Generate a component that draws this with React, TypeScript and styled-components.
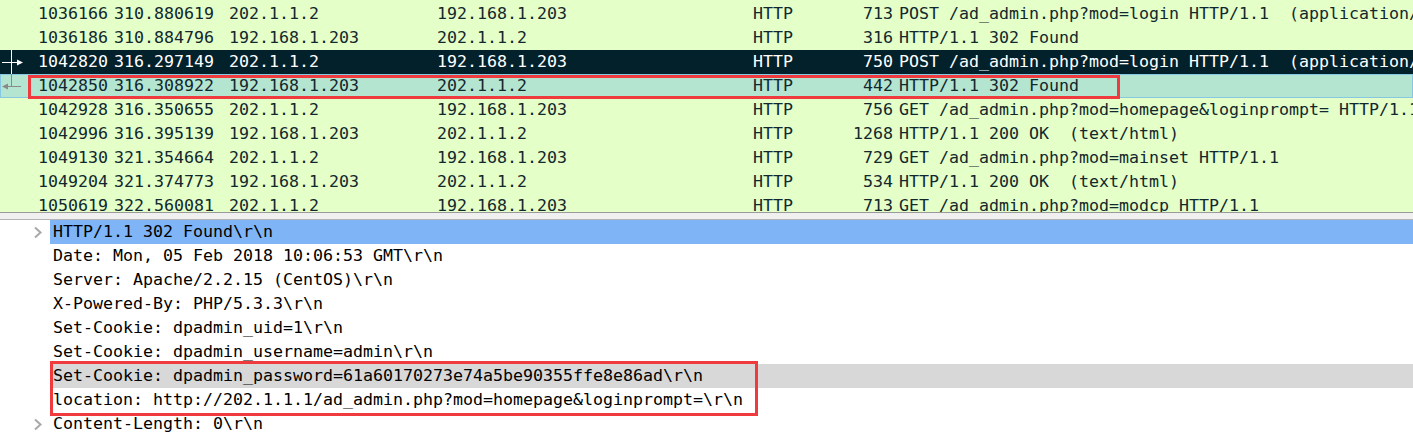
import React from "react";
import styled, { createGlobalStyle, css } from "styled-components";

const GlobalStyle = createGlobalStyle`
  html, body {
    margin: 0;
    padding: 0;
    background: #ffffff;
  }
  body {
    font-family: "DejaVu Sans Mono", "Liberation Mono", monospace;
    font-size: 16.61px;
  }
`;

type RowKind = "normal" | "selected" | "related";

interface Packet {
  no: string;
  time: string;
  src: string;
  dst: string;
  proto: string;
  len: string;
  info: string;
  kind: RowKind;
  marked?: boolean;
}

const packets: Packet[] = [
  { no: "1036166", time: "310.880619", src: "202.1.1.2", dst: "192.168.1.203", proto: "HTTP", len: "713", info: "POST /ad_admin.php?mod=login HTTP/1.1  (application/x-www-form-urlencoded)", kind: "normal" },
  { no: "1036186", time: "310.884796", src: "192.168.1.203", dst: "202.1.1.2", proto: "HTTP", len: "316", info: "HTTP/1.1 302 Found", kind: "normal" },
  { no: "1042820", time: "316.297149", src: "202.1.1.2", dst: "192.168.1.203", proto: "HTTP", len: "750", info: "POST /ad_admin.php?mod=login HTTP/1.1  (application/x-www-form-urlencoded)", kind: "selected" },
  { no: "1042850", time: "316.308922", src: "192.168.1.203", dst: "202.1.1.2", proto: "HTTP", len: "442", info: "HTTP/1.1 302 Found", kind: "related", marked: true },
  { no: "1042928", time: "316.350655", src: "202.1.1.2", dst: "192.168.1.203", proto: "HTTP", len: "756", info: "GET /ad_admin.php?mod=homepage&loginprompt= HTTP/1.1", kind: "normal" },
  { no: "1042996", time: "316.395139", src: "192.168.1.203", dst: "202.1.1.2", proto: "HTTP", len: "1268", info: "HTTP/1.1 200 OK  (text/html)", kind: "normal" },
  { no: "1049130", time: "321.354664", src: "202.1.1.2", dst: "192.168.1.203", proto: "HTTP", len: "729", info: "GET /ad_admin.php?mod=mainset HTTP/1.1", kind: "normal" },
  { no: "1049204", time: "321.374773", src: "192.168.1.203", dst: "202.1.1.2", proto: "HTTP", len: "534", info: "HTTP/1.1 200 OK  (text/html)", kind: "normal" },
  { no: "1050619", time: "322.560081", src: "202.1.1.2", dst: "192.168.1.203", proto: "HTTP", len: "713", info: "GET /ad_admin.php?mod=modcp HTTP/1.1", kind: "normal" },
];

const Page = styled.div`
  display: flex;
  flex-direction: column;
  width: 1413px;
  height: 436px;
  overflow: hidden;
  background: #ffffff;
`;

const PacketList = styled.div`
  height: 212px;
  padding-top: 2px;
  box-sizing: border-box;
  background: #e4ffc7;
  overflow: hidden;
  flex: none;
`;

const rowColors: Record<RowKind, ReturnType<typeof css>> = {
  normal: css`
    background: #e4ffc7;
    color: #12272e;
  `,
  selected: css`
    background: #03212b;
    color: #ffffff;
  `,
  related: css`
    background: #b4e5d1;
    color: #12272e;
    box-shadow: inset 0 0 0 1px #86c8e2;
  `,
};

const PacketRow = styled.div<{ $kind: RowKind }>`
  position: relative;
  display: grid;
  grid-template-columns: 28px 84px 115px 208px 316px 94px 52px 1fr;
  height: 24px;
  line-height: 24px;
  white-space: pre;
  ${(p) => rowColors[p.$kind]}
`;

const Cell = styled.div<{ $right?: boolean }>`
  overflow: hidden;
  padding: ${(p) => (p.$right ? "0 4px 0 0" : "0 0 0 2px")};
  text-align: ${(p) => (p.$right ? "right" : "left")};
`;

const Gutter = styled.div`
  position: relative;
  height: 24px;
  svg {
    display: block;
  }
`;

const RowMark = styled.div`
  position: absolute;
  left: 28px;
  top: 1px;
  width: 1092px;
  height: 24px;
  box-sizing: border-box;
  border: 3px solid #ef3b3d;
  z-index: 2;
  pointer-events: none;
`;

const Splitter = styled.div`
  flex: none;
  height: 8px;
  box-sizing: border-box;
  background: #f0f0f0;
  border-top: 1px solid #9a9a9a;
  border-bottom: 1px solid #b4b4b4;
`;

const DetailPane = styled.div`
  flex: 1;
  background: #ffffff;
  color: #000000;
`;

type Highlight = "none" | "blue" | "gray";

const DetailRow = styled.div`
  display: flex;
  height: 24px;
  line-height: 24px;
  white-space: pre;
`;

const Expander = styled.div`
  width: 50px;
  flex: none;
  svg {
    display: block;
  }
`;

const highlightBg: Record<Highlight, string> = {
  none: "transparent",
  blue: "#7fb4f6",
  gray: "#d8d8d8",
};

const DetailText = styled.div<{ $hl: Highlight }>`
  flex: 1;
  padding-left: 3px;
  background: ${(p) => highlightBg[p.$hl]};
  overflow: hidden;
`;

const MarkedGroup = styled.div`
  position: relative;
`;

const GroupMark = styled.div`
  position: absolute;
  left: 50px;
  top: -3px;
  width: 708px;
  height: 55px;
  box-sizing: border-box;
  border: 3px solid #ef3b3d;
  pointer-events: none;
`;

const RequestMark = () => (
  <svg width="28" height="24" viewBox="0 0 28 24">
    <line x1="11.5" y1="0" x2="11.5" y2="24" stroke="#ffffff" strokeWidth="1" />
    <line x1="2" y1="12.5" x2="18" y2="12.5" stroke="#ffffff" strokeWidth="1" />
    <polygon points="17,9.5 23,12.5 17,15.5" fill="#ffffff" />
  </svg>
);

const ResponseMark = () => (
  <svg width="28" height="24" viewBox="0 0 28 24">
    <line x1="11.5" y1="0" x2="11.5" y2="12.5" stroke="#8a8a8a" strokeWidth="1" />
    <line x1="6" y1="12.5" x2="21" y2="12.5" stroke="#8a8a8a" strokeWidth="1" />
    <polygon points="8,9.5 2,12.5 8,15.5" fill="#8a8a8a" />
  </svg>
);

const Chevron = () => (
  <svg width="50" height="24" viewBox="0 0 50 24">
    <polyline points="35,7.5 40.5,12.5 35,17.5" fill="none" stroke="#a8a8a8" strokeWidth="2" />
  </svg>
);

const Line = ({ text, hl = "none", expandable = false }: { text: string; hl?: Highlight; expandable?: boolean }) => (
  <DetailRow>
    <Expander>{expandable && <Chevron />}</Expander>
    <DetailText $hl={hl}>{text}</DetailText>
  </DetailRow>
);

export default function App() {
  return (
    <>
      <GlobalStyle />
      <Page>
        <PacketList>
          {packets.map((p) => (
            <PacketRow key={p.no} $kind={p.kind}>
              <Gutter>
                {p.kind === "selected" && <RequestMark />}
                {p.kind === "related" && <ResponseMark />}
              </Gutter>
              <Cell $right>{p.no}</Cell>
              <Cell>{p.time}</Cell>
              <Cell>{p.src}</Cell>
              <Cell>{p.dst}</Cell>
              <Cell>{p.proto}</Cell>
              <Cell $right>{p.len}</Cell>
              <Cell>{p.info}</Cell>
              {p.marked && <RowMark />}
            </PacketRow>
          ))}
        </PacketList>
        <Splitter />
        <DetailPane>
          <Line text={"HTTP/1.1 302 Found\\r\\n"} hl="blue" expandable />
          <Line text={"Date: Mon, 05 Feb 2018 10:06:53 GMT\\r\\n"} />
          <Line text={"Server: Apache/2.2.15 (CentOS)\\r\\n"} />
          <Line text={"X-Powered-By: PHP/5.3.3\\r\\n"} />
          <Line text={"Set-Cookie: dpadmin_uid=1\\r\\n"} />
          <Line text={"Set-Cookie: dpadmin_username=admin\\r\\n"} />
          <MarkedGroup>
            <Line text={"Set-Cookie: dpadmin_password=61a60170273e74a5be90355ffe8e86ad\\r\\n"} hl="gray" />
            <Line text={"location: http://202.1.1.1/ad_admin.php?mod=homepage&loginprompt=\\r\\n"} />
            <GroupMark />
          </MarkedGroup>
          <Line text={"Content-Length: 0\\r\\n"} expandable />
        </DetailPane>
      </Page>
    </>
  );
}
